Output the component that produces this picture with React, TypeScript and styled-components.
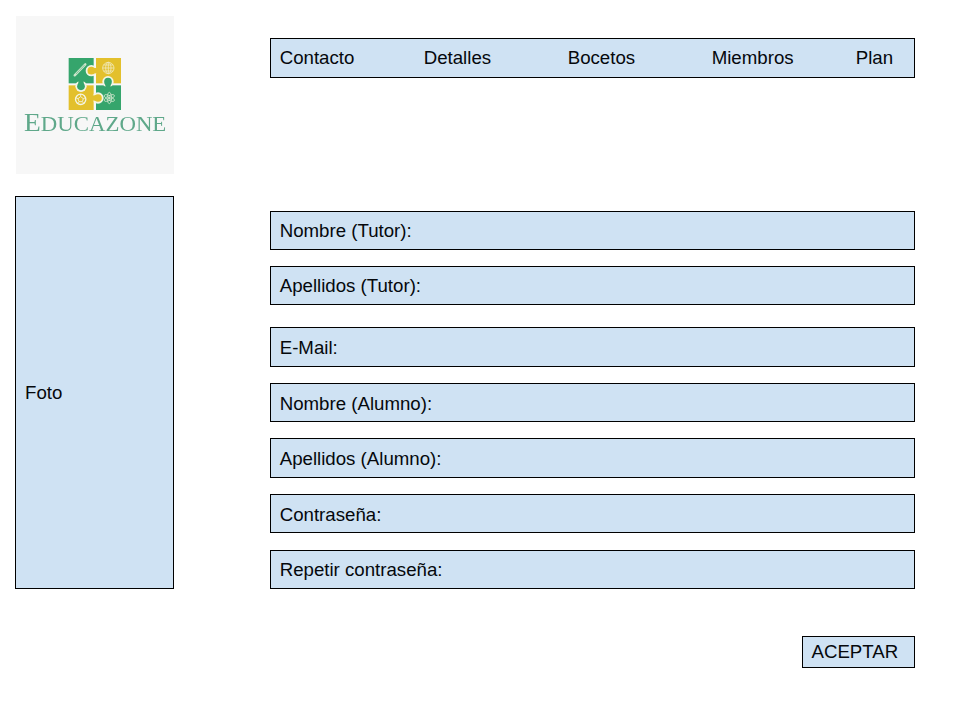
import React from 'react';
import styled, { createGlobalStyle } from 'styled-components';

const GlobalStyle = createGlobalStyle`
  * { box-sizing: border-box; }
  body { margin: 0; background: #fff; }
`;

const Page = styled.div`
  display: grid;
  grid-template-columns: 159px 645px;
  column-gap: 96px;
  width: 960px;
  height: 720px;
  padding: 16px 45px 0 15px;
  overflow: hidden;
  background: #fff;
  color: #05080c;
  font-family: 'Liberation Sans', Arial, sans-serif;
  font-size: 18.667px;
  line-height: 22px;
`;

const Sidebar = styled.aside`
  display: flex;
  flex-direction: column;
`;

const LogoPanel = styled.div`
  width: 158px;
  height: 158px;
  margin: 0 0 22px 1px;
  background: #f7f7f7;
`;

const LogoArt = styled.svg`
  display: block;
  filter: blur(0.4px);
`;

const Box = styled.div`
  display: flex;
  align-items: center;
  border: 1px solid #000;
  background: #cfe2f3;
  white-space: pre;
`;

const Photo = styled(Box)`
  height: 393px;
  padding-left: 9px;
`;

const Main = styled.main`
  display: flex;
  flex-direction: column;
  padding-top: 22px;
`;

const Nav = styled(Box).attrs({ as: 'nav' })`
  height: 40px;
  padding-left: 8.7px;
`;

const NavItem = styled.a`
  flex: 0 0 144px;
  color: inherit;

  &:last-child { flex-basis: auto; }
`;

const Form = styled.form`
  display: flex;
  flex-direction: column;
  margin-top: 133px;
`;

const Field = styled(Box)<{ $height: number; $gap: number; $drop: number }>`
  height: ${(p) => p.$height}px;
  margin-bottom: ${(p) => p.$gap}px;
  padding: ${(p) => p.$drop}px 0 0 8.7px;
`;

const Submit = styled.button`
  align-self: flex-end;
  width: 113px;
  height: 32px;
  padding: 0 0 0 8.5px;
  border: 1px solid #000;
  border-radius: 0;
  background: #cfe2f3;
  color: inherit;
  font: inherit;
  text-align: left;
`;

const GREEN = '#35a56c';
const YELLOW = '#e3c02c';
const PAPER = '#f4f5e4';

const navItems = ['Contacto', 'Detalles', 'Bocetos', 'Miembros', 'Plan'];

const fields = [
  { label: 'Nombre (Tutor):', height: 39, gap: 16, drop: 0 },
  { label: 'Apellidos (Tutor):', height: 39, gap: 22, drop: 0 },
  { label: 'E-Mail:', height: 40, gap: 16, drop: 2 },
  { label: 'Nombre (Alumno):', height: 39, gap: 16, drop: 2 },
  { label: 'Apellidos (Alumno):', height: 40, gap: 16, drop: 2 },
  { label: 'Contraseña:', height: 39, gap: 17, drop: 2 },
  { label: 'Repetir contraseña:', height: 39, gap: 47, drop: 0 },
];

function Logo() {
  return (
    <LogoArt width="158" height="158" viewBox="18 18 474 474" role="img" aria-label="Educazone">
      <rect x="176" y="144" width="75" height="76" fill={GREEN} />
      <rect x="258" y="144" width="75" height="76" fill={YELLOW} />
      <rect x="176" y="226" width="75" height="74" fill={YELLOW} />
      <rect x="258" y="226" width="75" height="74" fill={GREEN} />

      {/* interlocking knobs, each with a light seam */}
      <g fill={PAPER}>
        <circle cx="244" cy="182" r="17" />
        <circle cx="213" cy="229" r="17" />
        <circle cx="294" cy="215" r="17" />
        <circle cx="264" cy="264" r="17" />
      </g>
      <g fill={YELLOW}>
        <circle cx="244" cy="182" r="11.5" />
        <rect x="246" y="174" width="20" height="16" />
        <circle cx="264" cy="264" r="11.5" />
        <rect x="244" y="256" width="20" height="16" />
      </g>
      <g fill={GREEN}>
        <circle cx="213" cy="229" r="11.5" />
        <rect x="205" y="210" width="16" height="18" />
        <circle cx="294" cy="215" r="11.5" />
        <rect x="286" y="216" width="16" height="18" />
      </g>

      {/* pencil */}
      <g stroke={PAPER} fill="none" strokeLinecap="round">
        <path d="M194 196 L226 163" strokeWidth="7" opacity="0.8" />
        <path d="M199 191 L223 166" stroke={GREEN} strokeWidth="1.5" />
      </g>

      {/* globe */}
      <g stroke={PAPER} fill="none" strokeWidth="2.4" opacity="0.8">
        <circle cx="295" cy="174" r="17" />
        <ellipse cx="295" cy="174" rx="8" ry="17" />
        <path d="M295 157V191M278 174H312M281 165H309M281 183H309" />
      </g>

      {/* ball */}
      <circle cx="212" cy="268" r="15.5" fill="none" stroke={PAPER} strokeWidth="4" />
      <path
        d="M212 260L220 266L217 275H207L204 266ZM212 260V252M220 266L227 263M217 275L222 281M207 275L202 281M204 266L197 263"
        fill="none"
        stroke={PAPER}
        strokeWidth="2.5"
      />

      {/* atom */}
      <g stroke={PAPER} fill="none" strokeWidth="2.4" opacity="0.8">
        <ellipse cx="298" cy="264" rx="6.5" ry="17" />
        <ellipse cx="298" cy="264" rx="6.5" ry="17" transform="rotate(60 298 264)" />
        <ellipse cx="298" cy="264" rx="6.5" ry="17" transform="rotate(120 298 264)" />
        <circle cx="298" cy="264" r="3" fill={PAPER} />
      </g>

      <text
        x="42"
        y="364"
        fill="#5fa88a"
        fontFamily="'Liberation Serif', serif"
        fontSize="65"
        textLength="427"
        lengthAdjust="spacingAndGlyphs"
      >
        <tspan fontSize="78">E</tspan>
        <tspan>DUCAZONE</tspan>
      </text>
    </LogoArt>
  );
}

export default function App() {
  return (
    <>
      <GlobalStyle />
      <Page>
        <Sidebar>
          <LogoPanel>
            <Logo />
          </LogoPanel>
          <Photo>Foto</Photo>
        </Sidebar>
        <Main>
          <Nav>
            {navItems.map((item) => (
              <NavItem key={item}>{item}</NavItem>
            ))}
          </Nav>
          <Form>
            {fields.map((f) => (
              <Field key={f.label} $height={f.height} $gap={f.gap} $drop={f.drop}>
                {f.label}
              </Field>
            ))}
            <Submit type="button">ACEPTAR</Submit>
          </Form>
        </Main>
      </Page>
    </>
  );
}
